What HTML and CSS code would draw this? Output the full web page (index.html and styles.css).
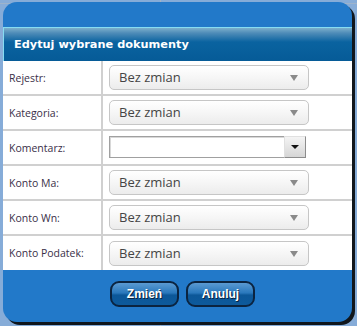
FILE: index.html
```html
<!DOCTYPE html>
<html>
<head>
    <meta charset="utf-8" />
    <title>Edytuj wybrane dokumenty</title>
    <link rel="stylesheet" href="styles.css">
</head>
<body>
<div class="dlg">
    <div class="dlg-top"></div>
    <div class="dlg-head">Edytuj wybrane dokumenty</div>
    <div class="dlg-body">
        <div class="row">
            <div class="lbl">Rejestr:</div>
            <div class="fld"><div class="sel">Bez zmian<span class="arr"></span></div></div>
        </div>
        <div class="row">
            <div class="lbl">Kategoria:</div>
            <div class="fld"><div class="sel">Bez zmian<span class="arr"></span></div></div>
        </div>
        <div class="row">
            <div class="lbl">Komentarz:</div>
            <div class="fld">
                <div class="combo"><input type="text" /><span class="cbtn"><span class="carr"></span></span></div>
            </div>
        </div>
        <div class="row">
            <div class="lbl">Konto Ma:</div>
            <div class="fld"><div class="sel">Bez zmian<span class="arr"></span></div></div>
        </div>
        <div class="row">
            <div class="lbl">Konto Wn:</div>
            <div class="fld"><div class="sel">Bez zmian<span class="arr"></span></div></div>
        </div>
        <div class="row last">
            <div class="lbl">Konto Podatek:</div>
            <div class="fld"><div class="sel">Bez zmian<span class="arr"></span></div></div>
        </div>
    </div>
    <div class="dlg-foot">
        <button class="btn">Zmień</button>
        <button class="btn">Anuluj</button>
    </div>
</div>
</body>
</html>
```

FILE: styles.css
```css
/*reset*/
body,div{margin:0; padding:0;}

body{
    width:357px; height:326px; overflow:hidden;
    background:#86acd8;
    background-image:
        linear-gradient(to right, transparent 160px, #a4b4c4 160px, #a4b4c4 161px, transparent 161px),
        linear-gradient(to bottom, transparent 3px, #9db3cb 3px, #9db3cb 4px, transparent 4px);
    font-family:"Open Sans","Noto Sans",sans-serif;
}

/*okno*/
.dlg{
    width:349px; height:320px;
    margin:2px 0 0 3px;
    background:#2279c9;
    border-radius:14px;
    box-shadow:3px 3px 0 #10161c;
    display:flex; flex-direction:column;
    overflow:hidden;
}
.dlg-top{height:25px; flex:none;}
.dlg-head{
    height:33px; flex:none;
    border-top:1px solid #86dcf2;
    border-left:1px solid #86dcf2;
    background:linear-gradient(to bottom, #7cb0cc 0, #4f8cb8 5px, #0a63a0 14px, #065b97 100%);
    color:#fff;
    font:bold 11.3px "DejaVu Sans",Verdana,sans-serif;
    line-height:34px;
    padding-left:10px;
}
.dlg-body{background:#fff; flex:none;}

.row{display:flex; height:33px; border-bottom:2px solid #d0d0d0;}
.row.last{border-bottom:none; height:34px;}
.lbl{
    width:100px; flex:none; box-sizing:border-box;
    border-right:2px solid #d0d0d0;
    padding-left:6px;
    font-size:10.5px; color:#3a2f48;
    display:flex; align-items:center;
}
.fld{flex:1; display:flex; align-items:center; padding-left:6px;}

.sel{
    position:relative;
    width:189px; height:23px;
    border:1px solid #c6c6c6; border-radius:5px;
    background:linear-gradient(to bottom, #ffffff 0, #f6f6f6 50%, #ececec 100%);
    padding-left:9px;
    font-size:13px; color:#444; line-height:23px;
}
.arr{
    position:absolute; right:10px; top:9px;
    border-left:4px solid transparent; border-right:4px solid transparent;
    border-top:6px solid #8a8a8a;
}

.combo{display:flex; height:22px; margin-top:-1px;}
.combo input{
    width:175px; height:22px; box-sizing:border-box; margin:0;
    border:1px solid #a0a0a0; border-right:none;
    box-shadow:inset 1px 1px 0 #d8d8d8;
    background:#fff;
}
.cbtn{
    width:22px; height:22px; box-sizing:border-box;
    border:1px solid #8c8c8c;
    border-top-color:#e0e0e0; border-left-color:#e0e0e0;
    background:linear-gradient(to bottom, #f4f4f4, #d6d6d6);
    display:flex; align-items:center; justify-content:center;
}
.carr{
    border-left:4px solid transparent; border-right:4px solid transparent;
    border-top:4px solid #111;
}

/*przyciski*/
.dlg-foot{flex:1; display:flex; justify-content:center; gap:7px; padding:11px 0 0 10px;}
.btn{
    width:69px; height:26px;
    border:2px solid #0b2440; border-radius:9px;
    background:linear-gradient(to bottom, #5a9ad2 0, #2a78bc 45%, #0c5798 55%, #0d5a9c 100%);
    color:#fff;
    font:bold 12px "Liberation Sans",Arial,sans-serif;
    text-shadow:1px 1px 0 #0b2440;
    padding:0;
}
```
